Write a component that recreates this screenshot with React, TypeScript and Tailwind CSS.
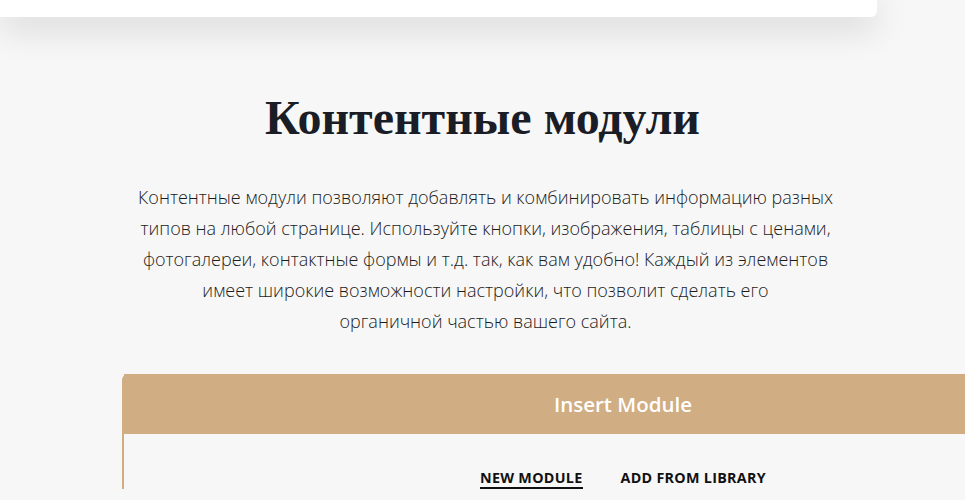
export default function App() {
  return (
    <div className="min-h-[500px] overflow-hidden bg-[#f7f7f7] font-['Open_Sans',sans-serif]">
      <div className="h-[17px] w-[877px] rounded-br-md bg-white shadow-[0_8px_36px_rgba(0,0,0,0.2)]" />
      <h1 className="mt-[73px] text-center font-['Liberation_Serif',serif] text-[48px] font-bold leading-[56px] text-[#1a1d26]">
        Контентные модули
      </h1>
      <p className="mx-auto mt-[36px] w-[760px] pl-[6px] text-center text-[18px] font-light leading-[31px] text-[#1c1c1c]">
        Контентные модули позволяют добавлять и комбинировать информацию разных
        <br />
        типов на любой странице. Используйте кнопки, изображения, таблицы с ценами,
        <br />
        фотогалереи, контактные формы и т.д. так, как вам удобно! Каждый из элементов
        <br />
        имеет широкие возможности настройки, что позволит сделать его
        <br />
        органичной частью вашего сайта.
      </p>
      <div className="ml-[122px] mt-[37px] w-[1000px] rounded-t-md border-l-2 border-[#d0ad82]">
        <div className="flex h-[60px] items-center justify-center rounded-tr-md bg-[#d0ad82] text-[20.5px] font-semibold text-white">
          Insert Module
        </div>
        <div className="flex justify-center gap-[38px] pt-[35px] text-[14.3px] font-bold tracking-[0.3px] text-[#111]">
          <span className="border-b-2 border-[#111] leading-[18px]">NEW MODULE</span>
          <span className="leading-[18px]">ADD FROM LIBRARY</span>
        </div>
      </div>
    </div>
  );
}
